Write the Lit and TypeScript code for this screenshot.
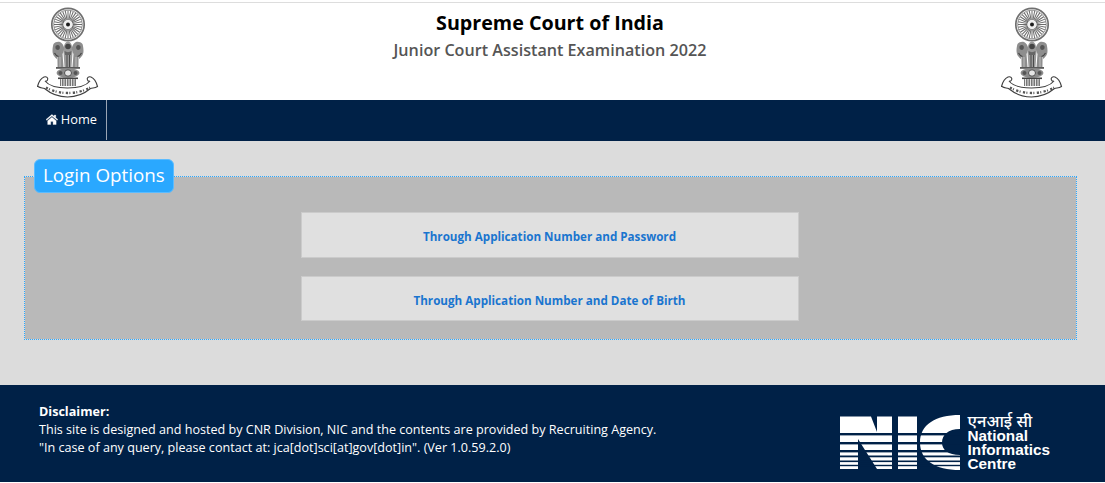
import { LitElement, html, css, svg } from "lit";
import { customElement } from "lit/decorators.js";

const spokes = Array.from({ length: 32 }, (_, i) => i * 11.25);

const lion = (cx: number, flip: number) => svg`
  <g transform="translate(${cx} 0) scale(${flip} 1)">
    <path d="M-7 37c2-2.500 6-3 8-1 2 2 3 4 2.500 7-.5 2-1 3-1.500 4l1 13h-6l-.5-8c-2-1.500-4.500-4-4.500-8 0-3 .5-5.500 1-7z" fill="#8e8e8e"/>
    <path d="M-4.800 39c1.200-1.200 3-1.200 3.800 0 .8 1.400.4 3-.8 3.800-1.500.4-2.700-.4-3.200-1.500-.2-.8-.2-1.600.2-2.300z" fill="#555"/>
    <path d="M-6 46c1 2 2.500 3 4 3.500" stroke="#444" stroke-width="1.100" fill="none"/>
    <path d="M-3 50v10M-.5 50v10" stroke="#d4d4d4" stroke-width=".7"/>
  </g>`;

const emblem = () => html`<svg class="emblem" viewBox="0 0 62 91" width="62" height="91">
  <defs><filter id="soft" x="-5%" y="-5%" width="110%" height="110%"><feGaussianBlur stdDeviation="0.4"/></filter></defs>
  <g filter="url(#soft)">
    <circle cx="31" cy="17.500" r="16.200" fill="#fff" stroke="#6f6f6f" stroke-width="1.700"/>
    <circle cx="31" cy="17.500" r="14.400" fill="none" stroke="#999" stroke-width="1"/>
    ${spokes.map((a) => svg`<line x1="31" y1="13" x2="31" y2="3.500" stroke="#6a6a6a" stroke-width="1" transform="rotate(${a} 31 17.500)"/>`)}
    <circle cx="31" cy="17.500" r="4.400" fill="#efefef"/>
    <circle cx="31" cy="17.500" r="2" fill="#1f1f1f"/>
    <path d="M27 40c0-3 2-5.500 4-5.500s4 2.500 4 5.500l.5 5-1 15h-7l-1-15z" fill="#9a9a9a"/>
    ${lion(23.500, 1)}
    ${lion(38.500, -1)}
    <circle cx="31" cy="39.500" r="2.800" fill="#454545"/>
    <path d="M27.500 44c2 1.500 5 1.500 7 0l-.6 4h-5.800z" fill="#666"/>
    <path d="M29.500 48h1v12h-1zM32 48h1v12h-1z" fill="#4a4a4a"/>
    <path d="M19 60h24v1.800H19z" fill="#5a5a5a"/>
    <ellipse cx="31" cy="66" rx="11.500" ry="4.800" fill="#8c8c8c"/>
    <ellipse cx="31" cy="66" rx="3.500" ry="3.200" fill="#e6e6e6" stroke="#444" stroke-width=".9"/>
    <circle cx="23.500" cy="66" r="2" fill="#555"/><circle cx="38.500" cy="66" r="2" fill="#555"/>
    <path d="M21 70.500h20v1.600H21z" fill="#444"/>
    <path d="M23 72.100h16V79H23z" fill="#777"/>
    <path d="M24.500 72v7M27 72v7M29.500 72v7M32 72v7M34.500 72v7M37 72v7" stroke="#f0f0f0" stroke-width=".9"/>
    <path d="M.5 79.500c1-4 3-8 6.500-9.500 2.500-1 4.500 1 3.500 3 -.5 1-1.500 1.500-2.500 1 4 5 13 7 22.500 7s18.500-2 22.500-7c-1 .5-2 0-2.500-1-1-2 1-4 3.500-3 3.500 1.500 5.500 5.500 6.500 9.500-3 2-5 1-7 2-6 5-14 8.500-23 8.500s-17-3.500-23-8.500c-2-1-4 0-6.500-2z" fill="#fff" stroke="#3f3f3f" stroke-width="1.100"/>
    <path d="M9 80.500c6 3.500 14 5.500 22 5.500s16-2 22-5.500" fill="none" stroke="#555" stroke-width="2.300" stroke-dasharray="2.200 1.300 1 2.400"/>
  </g>
</svg>`;

const stripes: [number, number][] = [
  [18, 2.4],
  [27, 2.4],
  [35, 2.4],
  [40.5, 1.8],
  [45.5, 1.6],
  [49.8, 1.4],
];

const nicLogo = () => html`<svg class="nic-mark" viewBox="0 0 120 56" width="120" height="56">
  <path fill="#fff" d="M0 1.500H31L37 17V1.500H52V54H37L18 24V54H0zM58 1.500H77V54H58zM120 0C95 0 80 10 80 27.500S95 55 120 55V40C108 40 102 35 102 27.500S108 14 120 14z"/>
  ${stripes.map(([y, h]) => svg`<rect x="0" y="${y}" width="120" height="${h}" fill="#002147"/>`)}
</svg>`;

@customElement("app-root")
export class AppRoot extends LitElement {
  static styles = css`
    :host {
      display: block;
      font-family: "Open Sans", "Noto Sans", sans-serif;
      background: #fff;
      height: 483px;
      overflow: hidden;
    }
    .top {
      margin-top: 2px;
      border-top: 1px solid #ddd;
      height: 98px;
      display: flex;
      justify-content: space-between;
      padding: 4px 42px 0 37px;
      box-sizing: border-box;
    }
    .titles {
      text-align: center;
      flex: 1;
      padding-top: 1px;
    }
    h1 {
      margin: 0;
      font-size: 19.7px;
      line-height: 30px;
      font-weight: 700;
      color: #000;
    }
    h2 {
      margin: 0;
      font-size: 16.15px;
      line-height: 24px;
      font-weight: 600;
      color: #555;
    }
    .emblem {
      display: block;
      flex: none;
    }
    nav {
      height: 41px;
      background: #002147;
      padding-left: 37px;
      display: flex;
    }
    .home {
      display: flex;
      align-items: center;
      gap: 3px;
      padding: 0 9px 2px;
      height: 40px;
      width: 70px;
      box-sizing: border-box;
      border-right: 1px solid #9aa5b5;
      color: #fff;
      font-size: 12.8px;
      text-decoration: none;
    }
    .home svg {
      display: block;
    }
    main {
      height: 244px;
      background: #dcdcdc;
      padding: 18px 28px 0 24px;
      box-sizing: border-box;
    }
    fieldset {
      margin: 0;
      padding: 0 0 18px;
      border: 1px dotted #2aa8ff;
      background: #b9b9b9;
      background-clip: padding-box;
      min-inline-size: 0;
    }
    legend {
      margin-left: 9px;
      padding: 0 8px;
      height: 34px;
      width: 140px;
      box-sizing: border-box;
      background: #2aa8ff;
      color: #fff;
      font-size: 18.8px;
      line-height: 30px;
      border-radius: 6px;
      border: 1px solid #5cbcff;
      white-space: nowrap;
    }
    .options {
      display: flex;
      flex-direction: column;
      align-items: center;
      gap: 18px;
      padding: 19px 2px 0 0;
    }
    .option {
      width: 498px;
      box-sizing: border-box;
      background: #e0e0e0;
      border: 1px solid #cbcbcb;
      text-align: center;
      color: #1a75cf;
      font-size: 11.65px;
      font-weight: 700;
      text-decoration: none;
      line-height: 16px;
    }
    .option.first {
      height: 46px;
      padding-top: 16px;
    }
    .option.second {
      height: 45px;
      padding-top: 16px;
    }
    footer {
      height: 97px;
      background: #002147;
      color: #fff;
      box-sizing: border-box;
      display: flex;
      justify-content: space-between;
      padding: 18px 55px 0 39px;
    }
    .disc {
      font-size: 12.58px;
      line-height: 18px;
    }
    .disc b {
      display: block;
      font-weight: 700;
    }
    .nic {
      display: flex;
      gap: 8px;
      padding-top: 12px;
    }
    .nic-mark {
      display: block;
    }
    .nic-text {
      font-family: "Liberation Sans", Arial, sans-serif;
      font-size: 15.3px;
      line-height: 14px;
      font-weight: 700;
      margin-top: -3px;
    }
    .hi {
      font-family: "Noto Sans", "Liberation Sans", sans-serif;
      font-weight: 500;
      font-size: 16.5px;
      line-height: 17px;
    }
  `;

  render() {
    return html`
      <header class="top">
        ${emblem()}
        <div class="titles">
          <h1>Supreme Court of India</h1>
          <h2>Junior Court Assistant Examination 2022</h2>
        </div>
        ${emblem()}
      </header>
      <nav>
        <a class="home" href="#">
          <svg viewBox="0 0 14 12" width="12" height="11"><path fill="#fff" stroke="#fff" stroke-width=".4" d="M7 0 0 6l.8 1L7 1.800 13.200 7l.8-1-2.500-2.100V.8H9.800v1.600zM2 7.500V12h3.600V8.500h2.800V12H12V7.500L7 3.300z"/></svg>
          Home
        </a>
      </nav>
      <main>
        <fieldset>
          <legend>Login Options</legend>
          <div class="options">
            <a class="option first" href="#">Through Application Number and Password</a>
            <a class="option second" href="#">Through Application Number and Date of Birth</a>
          </div>
        </fieldset>
      </main>
      <footer>
        <div class="disc">
          <b>Disclaimer:</b>
          This site is designed and hosted by CNR Division, NIC and the contents are provided by Recruiting Agency.<br />
          "In case of any query, please contact at: jca[dot]sci[at]gov[dot]in". (Ver 1.0.59.2.0)
        </div>
        <div class="nic">
          ${nicLogo()}
          <div class="nic-text">
            <div class="hi">एनआई सी</div>
            National<br />Informatics<br />Centre
          </div>
        </div>
      </footer>
    `;
  }
}
